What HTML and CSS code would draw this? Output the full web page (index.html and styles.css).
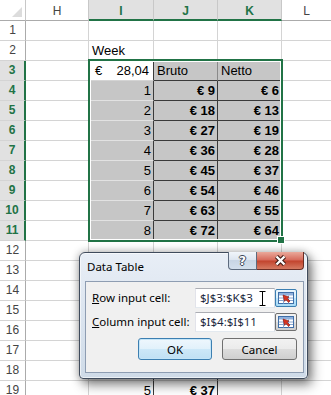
FILE: index.html
```html
<!DOCTYPE html>
<html>

<head>
    <title>Data Table</title>
    <link rel="stylesheet" href="styles.css">
</head>

<body>

    <!-- Worksheet -->
    <div class="sheet">
        <div class="row head">
            <div class="corner"><span class="tri"></span></div>
            <div class="col">H</div>
            <div class="col on">I</div>
            <div class="col on">J</div>
            <div class="col on">K</div>
            <div class="col">L</div>
        </div>
        <div class="row"><div class="rh">1</div><div></div><div></div><div></div><div></div><div></div></div>
        <div class="row"><div class="rh">2</div><div></div><div>Week</div><div></div><div></div><div></div></div>
        <div class="row">
            <div class="rh on">3</div><div></div>
            <div class="acc edge-r"><span>€</span><span>28,04</span></div>
            <div class="fill edge-b mid-r">Bruto</div>
            <div class="fill edge-b">Netto</div><div></div>
        </div>
        <div class="row"><div class="rh on">4</div><div></div><div class="fill num edge-r soft-b">1</div><div class="fill num bold edge-r edge-b">€ 9</div><div class="fill num bold edge-b">€ 6</div><div></div></div>
        <div class="row"><div class="rh on">5</div><div></div><div class="fill num edge-r soft-b">2</div><div class="fill num bold edge-r edge-b">€ 18</div><div class="fill num bold edge-b">€ 13</div><div></div></div>
        <div class="row"><div class="rh on">6</div><div></div><div class="fill num edge-r soft-b">3</div><div class="fill num bold edge-r edge-b">€ 27</div><div class="fill num bold edge-b">€ 19</div><div></div></div>
        <div class="row"><div class="rh on">7</div><div></div><div class="fill num edge-r soft-b">4</div><div class="fill num bold edge-r edge-b">€ 36</div><div class="fill num bold edge-b">€ 28</div><div></div></div>
        <div class="row"><div class="rh on">8</div><div></div><div class="fill num edge-r soft-b">5</div><div class="fill num bold edge-r edge-b">€ 45</div><div class="fill num bold edge-b">€ 37</div><div></div></div>
        <div class="row"><div class="rh on">9</div><div></div><div class="fill num edge-r soft-b">6</div><div class="fill num bold edge-r edge-b">€ 54</div><div class="fill num bold edge-b">€ 46</div><div></div></div>
        <div class="row"><div class="rh on">10</div><div></div><div class="fill num edge-r soft-b">7</div><div class="fill num bold edge-r edge-b">€ 63</div><div class="fill num bold edge-b">€ 55</div><div></div></div>
        <div class="row"><div class="rh on">11</div><div></div><div class="fill num edge-r soft-b">8</div><div class="fill num bold edge-r edge-b">€ 72</div><div class="fill num bold edge-b">€ 64</div><div></div></div>
        <div class="row"><div class="rh">12</div><div></div><div></div><div></div><div></div><div></div></div>
        <div class="row"><div class="rh">13</div><div></div><div class="edge-r"></div><div class="edge-r"></div><div></div><div></div></div>
        <div class="row"><div class="rh">14</div><div></div><div class="edge-r"></div><div class="edge-r"></div><div></div><div></div></div>
        <div class="row"><div class="rh">15</div><div></div><div class="edge-r"></div><div class="edge-r"></div><div></div><div></div></div>
        <div class="row"><div class="rh">16</div><div></div><div class="edge-r"></div><div class="edge-r"></div><div></div><div></div></div>
        <div class="row"><div class="rh">17</div><div></div><div class="edge-r"></div><div class="edge-r"></div><div></div><div></div></div>
        <div class="row"><div class="rh">18</div><div></div><div class="edge-r"></div><div class="edge-r"></div><div></div><div></div></div>
        <div class="row"><div class="rh">19</div><div></div><div class="num edge-r">5</div><div class="num bold edge-r">€ 37</div><div></div><div></div></div>
    </div>

    <!-- Selection outline I3:K11 -->
    <div class="selection"></div>
    <div class="fill-handle"></div>

    <!-- Data Table dialog -->
    <div class="dialog">
        <div class="titlebar">
            <span class="title">Data Table</span>
            <div class="caption">
                <span class="help">?</span>
                <span class="close">
                    <svg width="13" height="11" viewBox="0 0 13 11">
                        <path d="M2.5 1.5 L10.5 9.5 M10.5 1.5 L2.5 9.5" stroke="#3d1a14" stroke-width="4.4" />
                        <path d="M2.5 1.5 L10.5 9.5 M10.5 1.5 L2.5 9.5" stroke="#fff" stroke-width="2.4" />
                    </svg>
                </span>
            </div>
        </div>
        <div class="client">
            <div class="field">
                <label><u>R</u>ow input cell:</label>
                <div class="refedit">
                    <div class="box">
                        $J$3:$K$3
                        <svg class="ibeam" width="7" height="17" viewBox="0 0 7 17">
                            <path d="M0.5 1.5h6M3.5 1.5v14M0.5 15.5h6" stroke="#000" fill="none" />
                        </svg>
                    </div>
                    <span class="pick hot">
                        <svg width="16" height="12" viewBox="0 0 16 12">
                            <rect x="0.5" y="0.5" width="15" height="11" fill="#fff" stroke="#3f6fa8" />
                            <rect x="1" y="1" width="14" height="2.5" fill="#8fb0dc" />
                            <path d="M1 6h14M1 8.5h14M5.5 3.5v8M10.5 3.5v8" stroke="#8aa6cf" />
                            <path d="M5 3 L11 5 L9.2 6.2 L12 9 L10.6 10.4 L7.8 7.6 L6.6 9.4 Z" fill="#d8321f" stroke="#8a1a0e" stroke-width="0.6" />
                        </svg>
                    </span>
                </div>
            </div>
            <div class="field">
                <label><u>C</u>olumn input cell:</label>
                <div class="refedit">
                    <div class="box">$I$4:$I$11</div>
                    <span class="pick">
                        <svg width="16" height="12" viewBox="0 0 16 12">
                            <rect x="0.5" y="0.5" width="15" height="11" fill="#fff" stroke="#3f6fa8" />
                            <rect x="1" y="1" width="14" height="2.5" fill="#8fb0dc" />
                            <path d="M1 6h14M1 8.5h14M5.5 3.5v8M10.5 3.5v8" stroke="#8aa6cf" />
                            <path d="M5 3 L11 5 L9.2 6.2 L12 9 L10.6 10.4 L7.8 7.6 L6.6 9.4 Z" fill="#d8321f" stroke="#8a1a0e" stroke-width="0.6" />
                        </svg>
                    </span>
                </div>
            </div>
            <div class="actions">
                <button class="ok">OK</button>
                <button>Cancel</button>
            </div>
        </div>
    </div>

</body>

</html>
```

FILE: styles.css
```css
body {
    margin: 0;
    width: 331px;
    height: 395px;
    overflow: hidden;
    position: relative;
    background-color: #fff;
    font-family: 'Liberation Sans', Arial, sans-serif;
    color: #000;
}

/* Worksheet grid */
.sheet {
    font-size: 13px;
}

.row {
    display: grid;
    grid-template-columns: 26px 63px 65px 64px 64px 1fr;
    height: 20px;
}

.row > div {
    box-sizing: border-box;
    border-right: 1px solid #d4d4d4;
    border-bottom: 1px solid #d4d4d4;
    line-height: 19px;
    padding: 0 3px;
    white-space: nowrap;
    overflow: hidden;
}

.row > div:last-child {
    border-right: none;
}

.head {
    height: 21px;
}

.head > div {
    line-height: 20px;
    padding: 1px 0 0;
    text-align: center;
    font-size: 12px;
    color: #444;
    border-right-color: #c8c8c8;
    border-bottom-color: #ababab;
}

.head .col.on {
    background-color: #e1e1e1;
    color: #217346;
    font-weight: bold;
    border-bottom: 2px solid #217346;
}

.corner {
    display: flex;
    justify-content: flex-end;
    align-items: flex-end;
    padding: 0 3px 3px 0 !important;
}

.tri {
    width: 0;
    height: 0;
    border-left: 10px solid transparent;
    border-bottom: 10px solid #dcdcdc;
}

.row > .rh {
    padding: 0;
    text-align: center;
    font-size: 12px;
    color: #444;
    border-right-color: #ababab;
    border-bottom-color: #d4d4d4;
}

.row > .rh.on {
    background-color: #e1e1e1;
    color: #217346;
    font-weight: bold;
    border-right: 2px solid #217346;
}

.row > .fill {
    background-color: #c6c6c6;
}

.row > .num {
    text-align: right;
    padding-right: 2px;
}

.row > .bold {
    font-weight: bold;
}

.row > .edge-r {
    border-right-color: #3a3a3a;
}

.row > .mid-r {
    border-right-color: #8a8a8a;
}

.row > .edge-b {
    border-bottom-color: #3a3a3a;
}

.row > .soft-b {
    border-bottom-color: #e2e2e2;
}

.row > .acc {
    display: flex;
    justify-content: space-between;
    padding: 0 4px 0 6px;
}

/* Selection outline */
.selection {
    position: absolute;
    left: 88px;
    top: 59px;
    width: 195px;
    height: 183px;
    box-sizing: border-box;
    border: 2px solid #217346;
    box-shadow: inset 0 0 0 1px #fff;
}

.fill-handle {
    position: absolute;
    left: 277px;
    top: 236px;
    width: 6px;
    height: 6px;
    background-color: #217346;
    border: 1px solid #fff;
}

/* Dialog */
.dialog {
    position: absolute;
    left: 79px;
    top: 252px;
    width: 229px;
    height: 127px;
    box-sizing: border-box;
    border: 1px solid #3f4b5c;
    border-radius: 6px 6px 4px 4px;
    background: linear-gradient(#e8eef6, #cfdbe8);
    box-shadow: inset 0 0 0 1px rgba(255, 255, 255, 0.6), 0 0 8px rgba(0, 0, 0, 0.3), 4px 6px 12px rgba(0, 0, 0, 0.45);
    padding: 0 3px 5px 5px;
    display: flex;
    flex-direction: column;
    font-family: 'Noto Sans', sans-serif;
    font-size: 11.5px;
    color: #000;
}

.titlebar {
    height: 28px;
    display: flex;
    justify-content: space-between;
    align-items: flex-start;
}

.title {
    padding: 6px 0 0 2px;
    line-height: 15px;
}

.caption {
    display: flex;
    margin-top: -1px;
}

.caption span {
    box-sizing: border-box;
    height: 18px;
    display: flex;
    align-items: center;
    justify-content: center;
}

.help {
    width: 29px;
    border: 1px solid #5c6a7d;
    border-top: none;
    border-radius: 0 0 0 4px;
    background: linear-gradient(#f1f5fa, #dbe4ef 50%, #c8d5e4 50%, #d3dfec);
    font-family: 'DejaVu Sans', sans-serif;
    font-weight: bold;
    font-size: 12px;
    color: #fff;
    text-shadow: 1px 0 #3a4658, -1px 0 #3a4658, 0 1px #3a4658, 0 -1px #3a4658;
}

.close {
    width: 47px;
    border: 1px solid #6b2d24;
    border-top: none;
    border-left: none;
    border-radius: 0 0 4px 0;
    background: linear-gradient(#eaa99b, #d6695a 48%, #c2432d 52%, #d57a62);
}

.client {
    flex: 1;
    border: 1px solid #8e9db2;
    background-color: #f0f0f0;
    padding: 6px 6px 0 6px;
}

.field {
    display: flex;
    justify-content: space-between;
    height: 20px;
    margin-bottom: 4px;
}

.field label {
    line-height: 20px;
}

.refedit {
    display: flex;
}

.box {
    position: relative;
    box-sizing: border-box;
    width: 80px;
    height: 20px;
    border: 1px solid #abadb3;
    border-color: #abadb3 #dbdfe6 #e3e9ef #e2e3ea;
    background-color: #fff;
    padding-left: 4px;
    line-height: 18px;
    color: #1c2840;
}

.ibeam {
    position: absolute;
    left: 63px;
    top: 1px;
}

.pick {
    box-sizing: border-box;
    width: 22px;
    height: 18px;
    margin-top: 1px;
    border: 1px solid #707070;
    border-radius: 2px;
    background: linear-gradient(#f2f2f2, #ebebeb 50%, #dddddd 50%, #cfcfcf);
    display: flex;
    align-items: center;
    justify-content: center;
}

.pick.hot {
    border-color: #3c7fb1;
    background: linear-gradient(#eaf6fd, #d9f0fc 50%, #bee6fd 50%, #a7d9f5);
}

.actions {
    display: flex;
    justify-content: flex-end;
    gap: 10px;
    margin-top: 6px;
}

.actions button {
    box-sizing: border-box;
    width: 75px;
    height: 22px;
    padding: 0;
    border: 1px solid #707070;
    border-radius: 3px;
    background: linear-gradient(#f2f2f2, #ebebeb 50%, #dddddd 50%, #cfcfcf);
    font-family: 'Noto Sans', sans-serif;
    font-size: 11.5px;
    color: #000;
}

.actions .ok {
    width: 74px;
    border-color: #3c7fb1;
    box-shadow: inset 0 0 0 1px #c4e5f8;
    background: linear-gradient(#eef7fd, #e1f1fb 50%, #cde8f8 50%, #c0e0f4);
}
```
